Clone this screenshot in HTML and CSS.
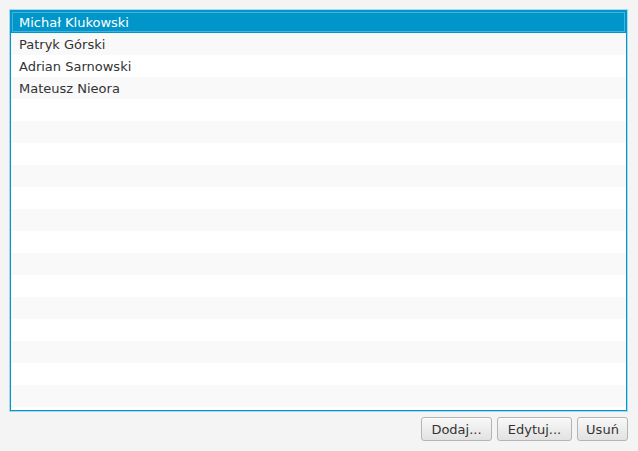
FILE: index.html
```html
<!DOCTYPE html>
<html>
<head>
<meta charset="utf-8">
<link rel="stylesheet" href="styles.css">
</head>
<body>
<div class="app">
  <div class="list">
    <div class="row sel">Michał Klukowski</div>
    <div class="row odd">Patryk Górski</div>
    <div class="row">Adrian Sarnowski</div>
    <div class="row odd">Mateusz Nieora</div>
    <div class="row"></div>
    <div class="row odd"></div>
    <div class="row"></div>
    <div class="row odd"></div>
    <div class="row"></div>
    <div class="row odd"></div>
    <div class="row"></div>
    <div class="row odd"></div>
    <div class="row"></div>
    <div class="row odd"></div>
    <div class="row"></div>
    <div class="row odd"></div>
    <div class="row"></div>
    <div class="row odd"></div>
    <div class="row"></div>
  </div>
  <div class="buttons">
    <button class="btn w-dodaj">Dodaj...</button>
    <button class="btn w-edytuj">Edytuj...</button>
    <button class="btn w-usun">Usuń</button>
  </div>
</div>
</body>
</html>
```
FILE: styles.css
```css
html, body {
  margin: 0;
  padding: 0;
  background: #f4f4f4;
  font-family: "DejaVu Sans", Verdana, sans-serif;
  font-size: 13px;
  color: #333;
}
.app {
  padding: 9px 10px 0 9px;
  display: flex;
  flex-direction: column;
  gap: 5px;
}
.list {
  height: 399px;
  border: 1px solid #0096c9;
  box-shadow: 0 0 0 1px #a8d7ee;
  margin: 1px;
  background: #fff;
  overflow: hidden;
}
.row {
  height: 22px;
  line-height: 22px;
  padding-left: 8px;
  padding-top: 1px;
  background: #fff;
  box-sizing: border-box;
  white-space: nowrap;
  overflow: hidden;
}
.row.odd {
  background: #f9f9f9;
}
.row.sel {
  background: #0096c9;
  color: #fff;
  box-shadow: inset 0 0 0 1px #0096c9, inset 0 0 0 2px #44b3de;
}
.buttons {
  display: flex;
  justify-content: flex-end;
  gap: 5px;
}
.btn {
  height: 24px;
  box-sizing: border-box;
  border: 1px solid #b5b5b5;
  border-radius: 3px;
  background: linear-gradient(#f8f8f8, #e2e2e2);
  font-family: "DejaVu Sans", Verdana, sans-serif;
  font-size: 13px;
  color: #333;
  padding: 0;
  box-shadow: inset 0 1px 0 #fff;
}
.w-dodaj { width: 71px; }
.w-edytuj { width: 75px; }
.w-usun { width: 51px; }
```
